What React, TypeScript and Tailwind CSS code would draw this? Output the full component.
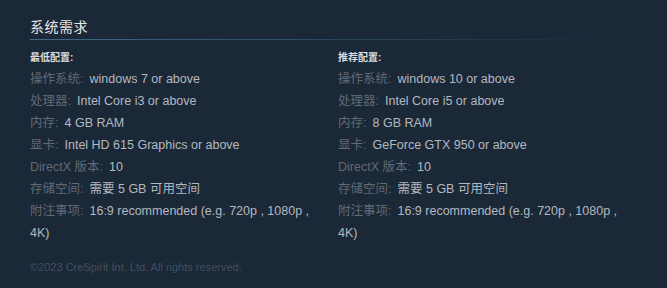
import React from "react";

type Row = { label: string; value: string };

const minRows: Row[] = [
  { label: "操作系统:", value: "windows 7 or above" },
  { label: "处理器:", value: "Intel Core i3 or above" },
  { label: "内存:", value: "4 GB RAM" },
  { label: "显卡:", value: "Intel HD 615 Graphics or above" },
  { label: "DirectX 版本:", value: "10" },
  { label: "存储空间:", value: "需要 5 GB 可用空间" },
  { label: "附注事项:", value: "16:9 recommended (e.g. 720p , 1080p , 4K)" },
];

const recRows: Row[] = [
  { label: "操作系统:", value: "windows 10 or above" },
  { label: "处理器:", value: "Intel Core i5 or above" },
  { label: "内存:", value: "8 GB RAM" },
  { label: "显卡:", value: "GeForce GTX 950 or above" },
  { label: "DirectX 版本:", value: "10" },
  { label: "存储空间:", value: "需要 5 GB 可用空间" },
  { label: "附注事项:", value: "16:9 recommended (e.g. 720p , 1080p , 4K)" },
];

const font = { fontFamily: '"Liberation Sans", Arial, "Noto Sans CJK SC", sans-serif' };

function Column({ title, rows }: { title: string; rows: Row[] }) {
  return (
    <div className="w-[296px]">
      <div className="text-[10px] leading-[14px] font-bold text-[#dcdedf]">{title}</div>
      <ul className="mt-[3px]">
        {rows.map((r) => (
          <li key={r.label} className="text-[12.5px] leading-[22px] text-[#b3b9bf]">
            <span className="text-[#626a73] mr-[6px]">{r.label}</span>
            {r.value}
          </li>
        ))}
      </ul>
    </div>
  );
}

export default function App() {
  return (
    <div className="w-[667px] h-[288px] bg-[#1b2838] pl-[30px] pt-[17px] overflow-hidden" style={font}>
      <h2 className="text-[14px] leading-[20px] text-[#e5e7e9] tracking-[0.5px] font-normal">系统需求</h2>
      <div className="mt-[2px] h-px w-[580px] bg-gradient-to-r from-[#3e6a88] via-[#2c4a62] to-transparent" />
      <div className="mt-[11px] flex gap-[12px]">
        <Column title="最低配置:" rows={minRows} />
        <Column title="推荐配置:" rows={recRows} />
      </div>
      <div className="mt-[16px] text-[11px] leading-[14px] text-[#434f5c]">
        ©2023 CreSpirit Int. Ltd. All rights reserved.
      </div>
    </div>
  );
}
